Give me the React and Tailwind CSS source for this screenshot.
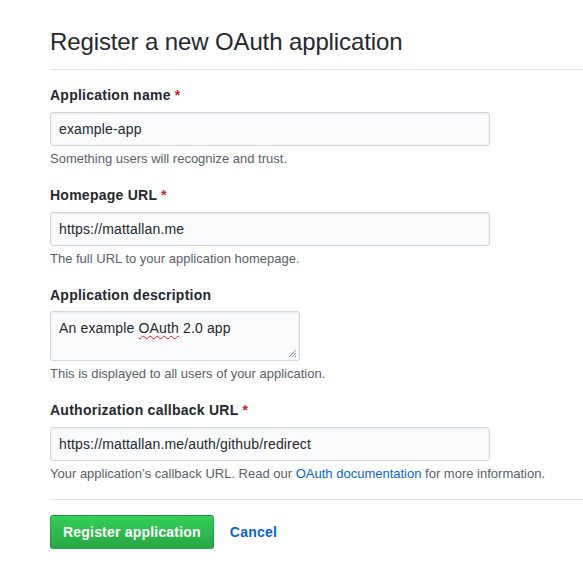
import React from 'react';

const fields = [
    { label: 'Application name', value: 'example-app', note: 'Something users will recognize and trust.', required: true },
    { label: 'Homepage URL', value: 'https://mattallan.me', note: 'The full URL to your application homepage.', required: true },
];

const Input = ({ value }) => (
    <input
        type="text"
        readOnly
        value={value}
        className="block w-[440px] h-[34px] px-[8px] py-[6px] text-[14px] leading-[20px] tracking-[0.15px] text-[#24292e] bg-[#fafbfc] border border-[#d1d5da] rounded-[3px] shadow-[inset_0_1px_2px_rgba(27,31,35,0.075)] outline-none"
    />
);

const Label = ({ children, required }) => (
    <label className="block mb-[6px] text-[14px] leading-[21px] tracking-[0.25px] font-bold text-[#24292e]">
        {children}
        {required && <span className="text-[#cb2431]"> *</span>}
    </label>
);

const Note = ({ children }) => (
    <p className="mt-[4px] text-[13px] leading-[18px] text-[#586069]">{children}</p>
);

const App = () => {
    return (
        <div className="min-h-screen bg-white pt-[27px] pl-[50px] font-['Liberation_Sans',Arial,sans-serif] text-[#24292e]">
            {/* Header */}
            <div className="pb-[12px] mb-[15px] border-b border-[#e1e4e8]">
                <h2 className="text-[24px] leading-[30px] tracking-[-0.12px] font-normal">Register a new OAuth application</h2>
            </div>

            <form onSubmit={(e) => e.preventDefault()}>
                {fields.map((f) => (
                    <div key={f.label} className="mb-[17px]">
                        <Label required={f.required}>{f.label}</Label>
                        <Input value={f.value} />
                        <Note>{f.note}</Note>
                    </div>
                ))}

                <div className="mb-[17px]">
                    <Label>Application description</Label>
                    {/* fake textarea so the spellcheck squiggle shows */}
                    <div className="relative -mt-px w-[250px] h-[50px] px-[8px] py-[6px] text-[14px] leading-[20px] tracking-[0.15px] text-[#24292e] bg-[#fafbfc] border border-[#d1d5da] rounded-[3px] shadow-[inset_0_1px_2px_rgba(27,31,35,0.075)]">
                        An example <span className="underline decoration-wavy decoration-[#e0191f] decoration-1 underline-offset-2">OAuth</span> 2.0 app
                        <svg className="absolute right-[2px] bottom-[2px] w-[9px] h-[9px]" viewBox="0 0 9 9">
                            <path d="M8 1 L1 8 M8 4 L4 8 M8 7 L7 8" stroke="#8a8f96" strokeWidth="1" />
                        </svg>
                    </div>
                    <Note>This is displayed to all users of your application.</Note>
                </div>

                <div className="mb-[16px]">
                    <Label required>Authorization callback URL</Label>
                    <Input value="https://mattallan.me/auth/github/redirect" />
                    <Note>
                        Your application’s callback URL. Read our{' '}
                        <a href="#" className="text-[#0366d6]">OAuth documentation</a> for more information.
                    </Note>
                </div>

                <div className="border-t border-[#e1e4e8] pt-[15px] flex items-center">
                    <button
                        type="submit"
                        className="h-[34px] px-[12px] text-[14px] leading-[20px] tracking-[0.2px] font-bold text-white rounded-[3px] border border-[rgba(27,31,35,0.2)] bg-gradient-to-b from-[#34d058] to-[#28a745]"
                    >
                        Register application
                    </button>
                    <a href="#" className="ml-[16px] text-[14px] tracking-[0.25px] font-bold text-[#0366d6]">Cancel</a>
                </div>
            </form>
        </div>
    );
};

export default App;
